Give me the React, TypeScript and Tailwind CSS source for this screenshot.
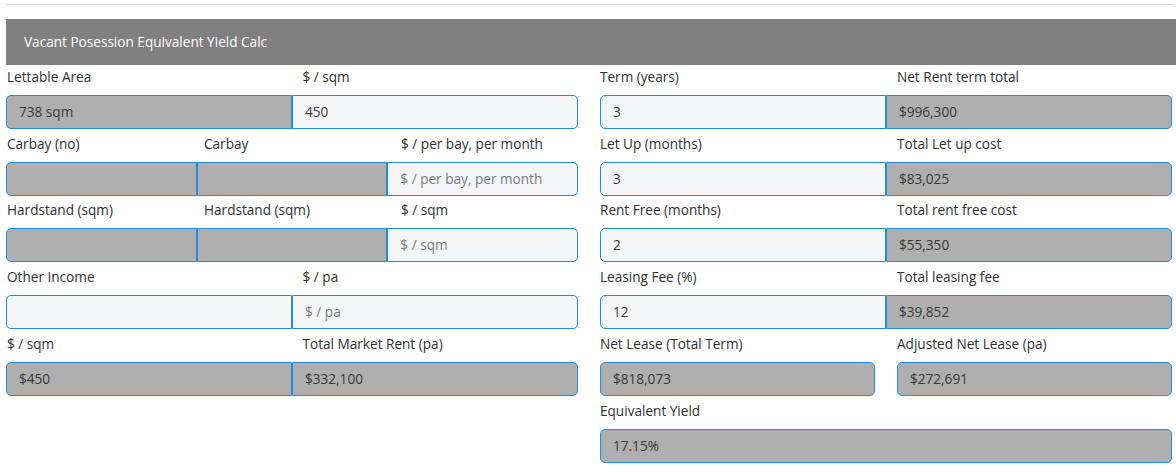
import React from "react";

type Cell = { v?: string; ph?: string; gray?: boolean };

const font = { fontFamily: '"Open Sans", "Noto Sans", Arial, sans-serif' };

function Labels({ items, right }: { items: string[]; right?: boolean }) {
  const cols = items.length === 3 ? "grid-cols-3" : items.length === 2 ? "grid-cols-2" : "grid-cols-1";
  return (
    <div className={`grid ${cols} ${right ? "gap-x-[22px] pl-0" : "gap-x-[20px] pl-px"} h-[24px] items-center text-[13.6px] text-[#2f2f2f] leading-[24px] mb-[6px]`}>
      {items.map((t, i) => (
        <div key={i}>{t}</div>
      ))}
    </div>
  );
}

function Group({ cells }: { cells: Cell[] }) {
  return (
    <div className="flex h-[34px]">
      {cells.map((c, i) => {
        const first = i === 0;
        const last = i === cells.length - 1;
        return (
          <div
            key={i}
            className={`flex-1 min-w-0 flex items-center pl-[12px] border border-[#1c8fe0] text-[13.6px] ${
              c.gray ? "bg-[#afafaf]" : "bg-[#f4f5f7]"
            } ${first ? "rounded-l-[5px]" : ""} ${last ? "rounded-r-[5px]" : ""}`}
          >
            {c.v ? (
              <span className="text-[#383838]">{c.v}</span>
            ) : c.ph ? (
              <span className="text-[#7a7a7a]">{c.ph}</span>
            ) : null}
          </div>
        );
      })}
    </div>
  );
}

function Row({
  labels,
  cells,
  pt,
  right,
}: {
  labels: string[];
  cells: Cell[];
  pt?: string;
  right?: boolean;
}) {
  return (
    <div className={pt ?? "pt-[3px]"}>
      <Labels items={labels} right={right} />
      <Group cells={cells} />
    </div>
  );
}

export default function App() {
  return (
    <div className="w-[1176px] h-[473px] bg-white overflow-hidden" style={font}>
      <div className="pt-[4px] pl-[6px] pr-[3px]">
        <div className="h-px bg-[#d6d6d6]" />
      </div>
      <div className="mt-[14px] ml-[6px] h-[46px] bg-[#808080] flex items-center pl-[18px] text-white text-[13.6px]">
        Vacant Posession Equivalent Yield Calc
      </div>
      <div className="grid grid-cols-2 gap-x-[22px] pl-[6px] pr-[4px]">
        <div>
          <Row
            pt="pt-0"
            labels={["Lettable Area", "$ / sqm"]}
            cells={[{ v: "738 sqm", gray: true }, { v: "450" }]}
          />
          <Row
            labels={["Carbay (no)", "Carbay", "$ / per bay, per month"]}
            cells={[{ gray: true }, { gray: true }, { ph: "$ / per bay, per month" }]}
          />
          <Row
            pt="pt-[2px]"
            labels={["Hardstand (sqm)", "Hardstand (sqm)", "$ / sqm"]}
            cells={[{ gray: true }, { gray: true }, { ph: "$ / sqm" }]}
          />
          <Row labels={["Other Income", "$ / pa"]} cells={[{}, { ph: "$ / pa" }]} />
          <Row
            labels={["$ / sqm", "Total Market Rent (pa)"]}
            cells={[{ v: "$450", gray: true }, { v: "$332,100", gray: true }]}
          />
        </div>
        <div>
          <Row
            pt="pt-0"
            right
            labels={["Term (years)", "Net Rent term total"]}
            cells={[{ v: "3" }, { v: "$996,300", gray: true }]}
          />
          <Row
            right
            labels={["Let Up (months)", "Total Let up cost"]}
            cells={[{ v: "3" }, { v: "$83,025", gray: true }]}
          />
          <Row
            pt="pt-[2px]"
            right
            labels={["Rent Free (months)", "Total rent free cost"]}
            cells={[{ v: "2" }, { v: "$55,350", gray: true }]}
          />
          <Row
            right
            labels={["Leasing Fee (%)", "Total leasing fee"]}
            cells={[{ v: "12" }, { v: "$39,852", gray: true }]}
          />
          <div className="pt-[3px]">
            <Labels right items={["Net Lease (Total Term)", "Adjusted Net Lease (pa)"]} />
            <div className="grid grid-cols-2 gap-x-[22px]">
              <Group cells={[{ v: "$818,073", gray: true }]} />
              <Group cells={[{ v: "$272,691", gray: true }]} />
            </div>
          </div>
          <Row right labels={["Equivalent Yield"]} cells={[{ v: "17.15%", gray: true }]} />
        </div>
      </div>
    </div>
  );
}
